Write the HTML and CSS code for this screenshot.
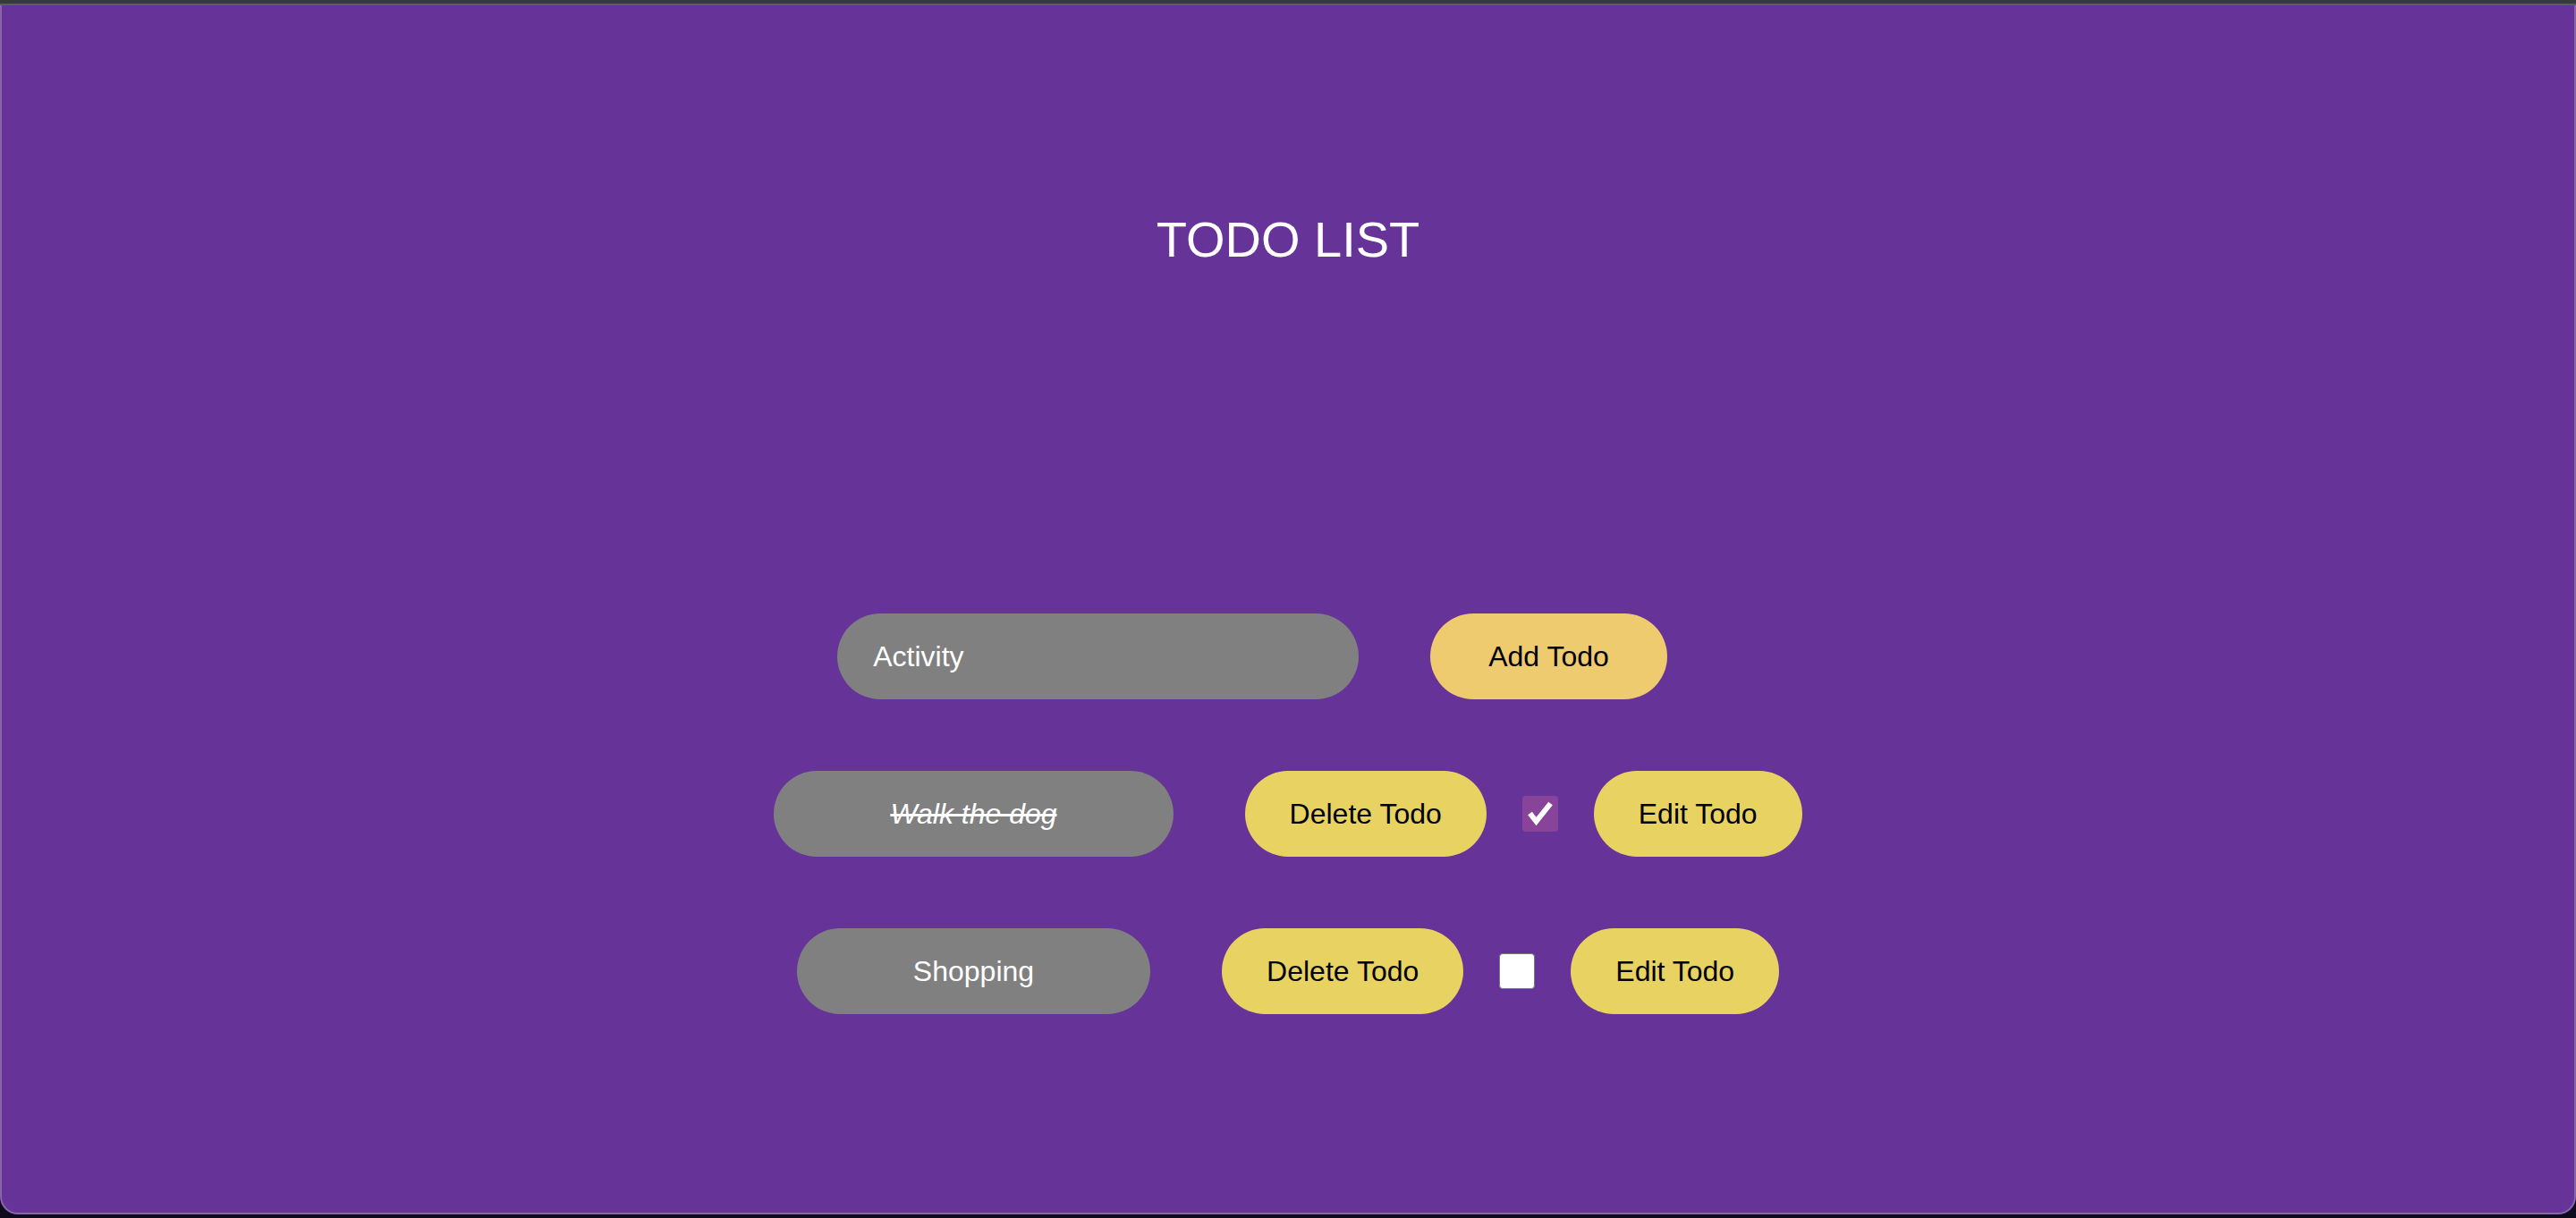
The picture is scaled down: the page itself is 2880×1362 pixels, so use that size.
FILE: index.html
```html
<!DOCTYPE html>
<html lang="en">
<head>
<meta charset="utf-8">
<title>Todo List</title>
<link rel="stylesheet" href="styles.css">
</head>
<body>
<div class="chrome-top"></div>
<div class="chrome-line"></div>
<main class="app">
  <h1 class="title">TODO LIST</h1>
  <form class="row add-row" onsubmit="return false">
    <input class="todo-input" type="text" value="Activity">
    <button class="btn btn-add" type="button">Add Todo</button>
  </form>
  <ul class="list">
    <li class="row todo-row">
      <span class="todo-text done">Walk the dog</span>
      <button class="btn btn-delete" type="button">Delete Todo</button>
      <span class="check checked" role="checkbox" aria-checked="true">
        <svg viewBox="0 0 40 40" width="40" height="40"><polyline points="8.5,19.5 15.5,28.5 31.5,8.5" fill="none" stroke="#fff" stroke-width="6" stroke-linecap="butt" stroke-linejoin="miter"/></svg>
      </span>
      <button class="btn btn-edit" type="button">Edit Todo</button>
    </li>
    <li class="row todo-row">
      <span class="todo-text">Shopping</span>
      <button class="btn btn-delete" type="button">Delete Todo</button>
      <span class="check" role="checkbox" aria-checked="false"></span>
      <button class="btn btn-edit" type="button">Edit Todo</button>
    </li>
  </ul>
</main>
</body>
</html>
```
FILE: styles.css
```css
html, body {
  margin: 0;
  padding: 0;
}
body {
  width: 2880px;
  height: 1362px;
  background: #0e0b1c;
  font-family: "Liberation Sans", Arial, sans-serif;
  overflow: hidden;
}
.chrome-top {
  height: 4px;
  background: #38393d;
}
.chrome-line {
  height: 2px;
  background: #5e5c62;
}
.app {
  box-sizing: border-box;
  height: 1352px;
  background: #663399;
  border: 2px solid #8866ac;
  border-top: none;
  border-radius: 0 0 20px 20px;
  padding-top: 230px;
  display: flex;
  flex-direction: column;
  align-items: center;
}
.title {
  margin: 0;
  font-size: 56px;
  line-height: 64px;
  font-weight: 400;
  color: #ffffff;
}
.row {
  display: flex;
  align-items: center;
  height: 96px;
}
.add-row {
  margin: 386px 0 0 0;
}
.list {
  list-style: none;
  margin: 80px 0 0 0;
  padding: 0;
  display: flex;
  flex-direction: column;
  align-items: center;
  gap: 80px;
}
.todo-input {
  box-sizing: border-box;
  width: 583px;
  height: 96px;
  padding: 0 40px;
  border: none;
  outline: none;
  border-radius: 48px;
  background: #808080;
  color: #ffffff;
  font-family: inherit;
  font-size: 32px;
  margin-right: 80px;
}
.btn {
  height: 96px;
  border: none;
  border-radius: 48px;
  font-family: inherit;
  font-size: 32px;
  color: #000000;
  padding: 0 50px;
  background: #e8d362;
  cursor: pointer;
}
.btn-add {
  background: #efcb6f;
  padding: 0 65px;
  margin-right: 80px;
}
.btn-delete {
  margin-right: 40px;
}
.todo-text {
  display: flex;
  align-items: center;
  height: 96px;
  padding: 0 130px;
  border-radius: 48px;
  background: #808080;
  color: #ffffff;
  font-size: 32px;
  margin-right: 80px;
}
.todo-text.done {
  font-style: italic;
  text-decoration: line-through;
}
.check {
  box-sizing: border-box;
  width: 40px;
  height: 40px;
  border-radius: 4px;
  background: #ffffff;
  border: 1.5px solid #7a7a7a;
  margin-right: 40px;
  display: flex;
  align-items: center;
  justify-content: center;
}
.check.checked {
  background: #88449a;
  border: none;
}
.check svg {
  display: block;
}
```
